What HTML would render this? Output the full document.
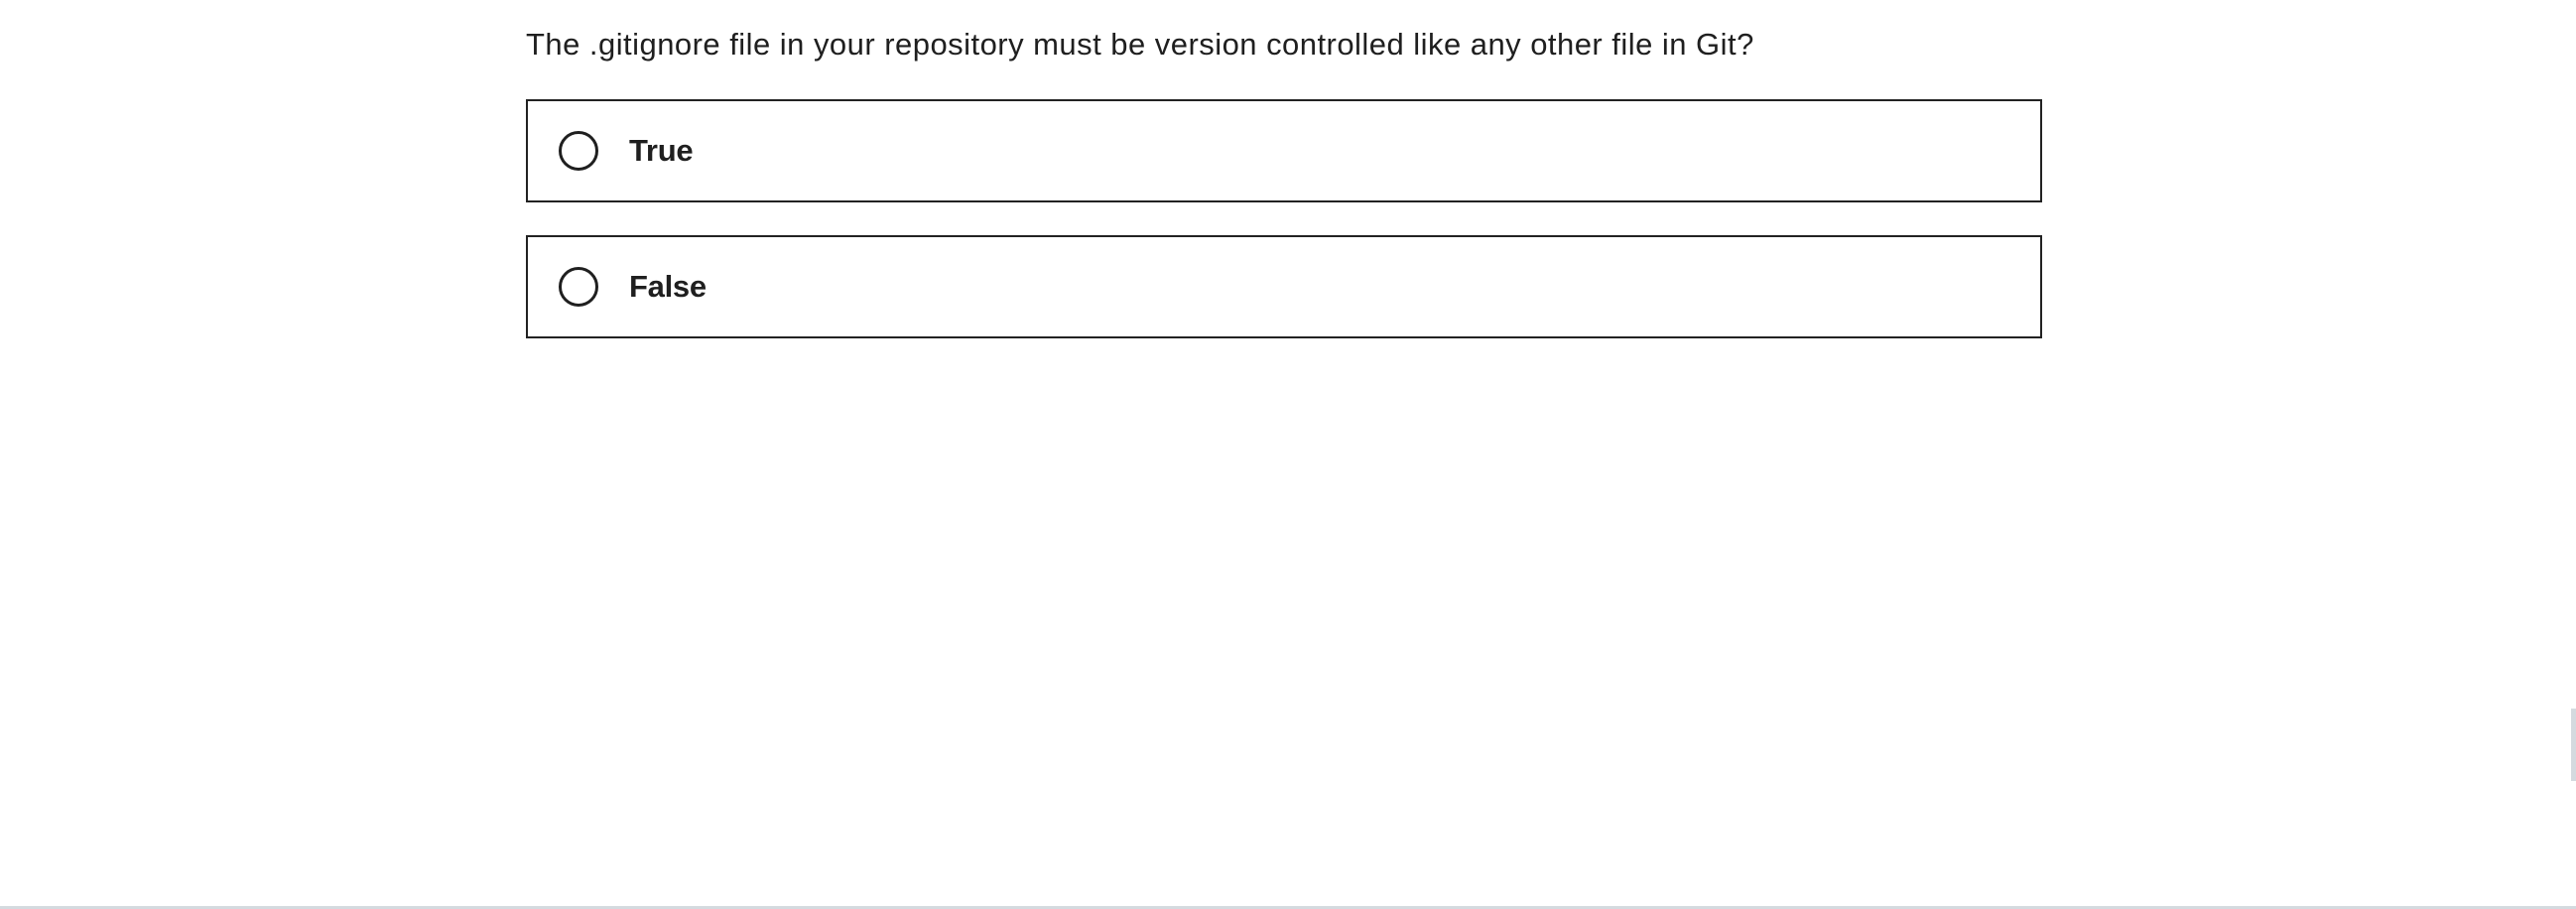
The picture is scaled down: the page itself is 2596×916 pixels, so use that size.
<!DOCTYPE html>
<html><head><meta charset="utf-8"><style>
html,body{margin:0;padding:0;background:#fff;width:2596px;height:916px;overflow:hidden;position:relative;font-family:"Liberation Sans",sans-serif;color:#1f1f1f}
.q{position:absolute;left:530px;top:25px;font-size:31px;line-height:40px;letter-spacing:0.47px;white-space:nowrap}
.box{position:absolute;left:530px;width:1524px;height:100px;border:2.5px solid #222;box-sizing:content-box}
.c{position:absolute;border:3.5px solid #1f1f1f;border-radius:50%;box-sizing:border-box;width:40px;height:40px;left:31px;top:30px}
.l{position:absolute;left:102px;top:30px;font-size:31px;font-weight:bold;line-height:40px;letter-spacing:-0.3px}
.sb{position:absolute;left:2591px;top:714px;width:5px;height:73px;background:#d4dadf}
.bl{position:absolute;left:0;top:913px;width:2596px;height:3px;background:#d4dadf}
</style></head><body>
<div class="q">The .gitignore file in your repository must be version controlled like any other file in Git?</div>
<div class="box" style="top:100px"><div class="c"></div><div class="l">True</div></div>
<div class="box" style="top:237px"><div class="c"></div><div class="l">False</div></div>
<div class="sb"></div>
<div class="bl"></div>
</body></html>
